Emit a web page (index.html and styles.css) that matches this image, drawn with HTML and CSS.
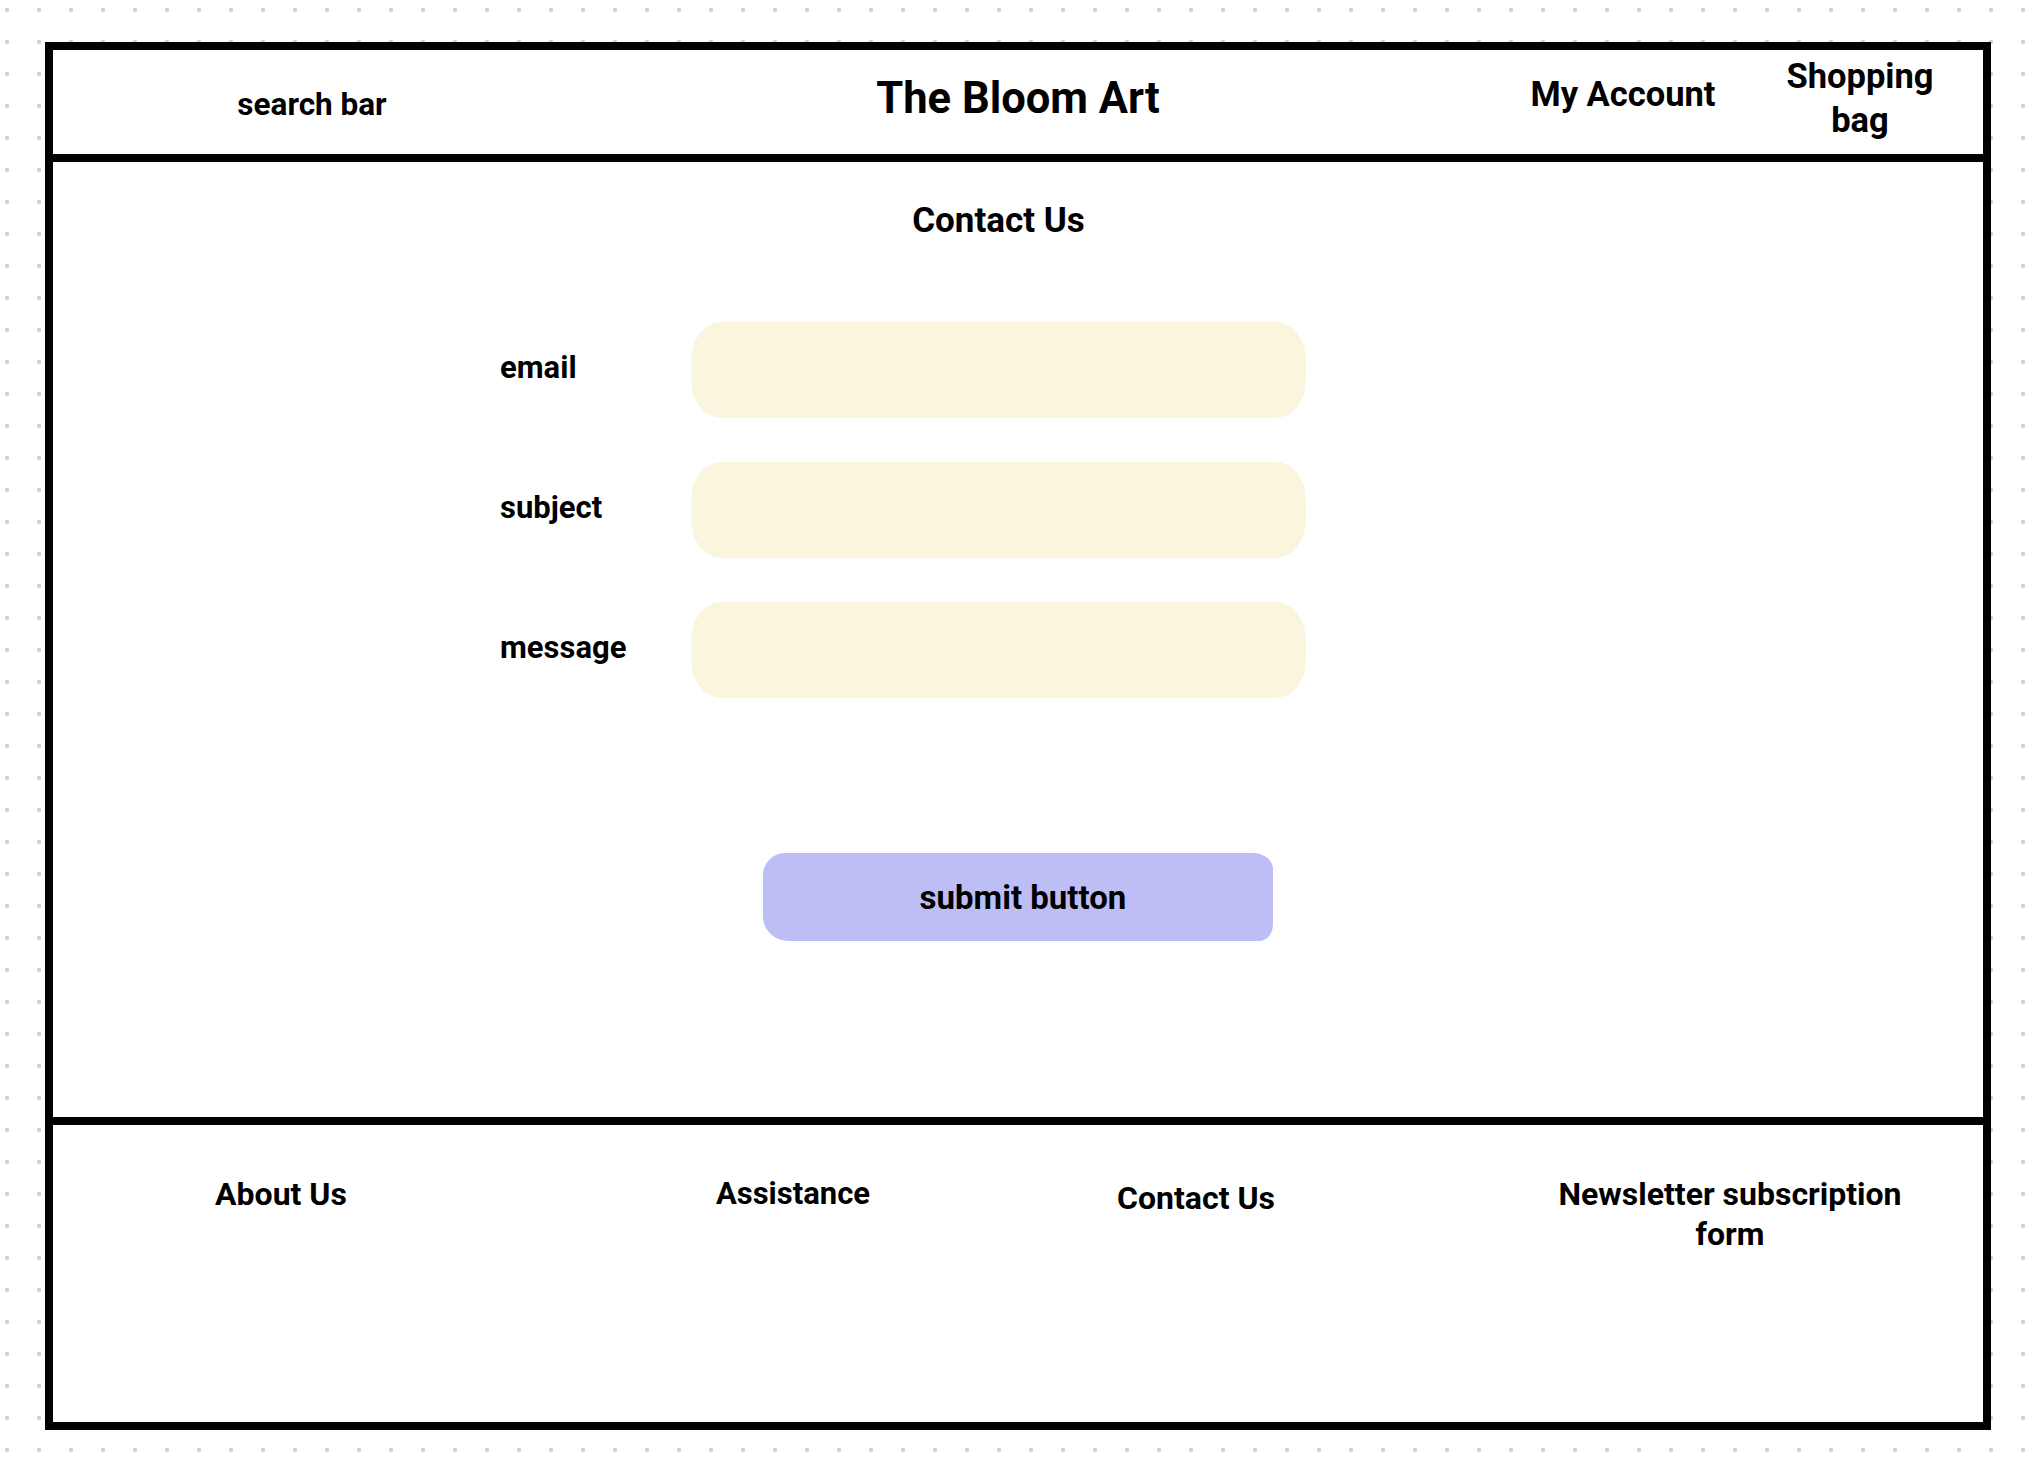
FILE: index.html
```html
<!DOCTYPE html>
<html lang="en">
<head>
<meta charset="utf-8">
<title>The Bloom Art - Contact Us</title>
<link rel="stylesheet" href="styles.css">
</head>
<body>
<div class="frame">
  <header class="site-header">
    <div class="hd-item hd-search">search bar</div>
    <div class="hd-item hd-brand">The Bloom Art</div>
    <div class="hd-item hd-account">My Account</div>
    <div class="hd-item hd-bag">Shopping bag</div>
  </header>
  <main class="content">
    <h1 class="page-title">Contact Us</h1>
    <form class="contact-form">
      <label class="field-label" for="email">email</label>
      <div class="field" id="email"></div>
      <label class="field-label" for="subject">subject</label>
      <div class="field" id="subject"></div>
      <label class="field-label" for="message">message</label>
      <div class="field" id="message"></div>
    </form>
    <div class="submit-wrap">
      <div class="submit-btn">submit button</div>
    </div>
  </main>
  <footer class="site-footer">
    <div class="ft-item ft-about">About Us</div>
    <div class="ft-item ft-assist">Assistance</div>
    <div class="ft-item ft-contact">Contact Us</div>
    <div class="ft-spacer"></div>
    <div class="ft-item ft-news">Newsletter subscription form</div>
  </footer>
</div>
</body>
</html>
```

FILE: styles.css
```css
html, body {
  margin: 0;
  padding: 0;
}

body {
  width: 2041px;
  height: 1475px;
  overflow: hidden;
  background-color: #ffffff;
  background-image: radial-gradient(circle, #cdd1db 2px, rgba(205, 209, 219, 0) 2.6px);
  background-size: 32px 32px;
  background-position: -9px -6px;
  font-family: Roboto, "Open Sans", Arial, sans-serif;
  font-weight: 700;
  color: #000;
  padding-top: 42px;
  padding-left: 45px;
  box-sizing: border-box;
}

.frame {
  width: 1946px;
  height: 1388px;
  box-sizing: border-box;
  border: 8px solid #000;
  background: #fff;
  display: flex;
  flex-direction: column;
}

/* Header */
.site-header {
  height: 104px;
  border-bottom: 8px solid #000;
  display: grid;
  grid-template-columns: 518px 894px 316px 158px 1fr;
  align-items: center;
  text-align: center;
}

.hd-search {
  font-size: 31.5px;
  padding-top: 4px;
}

.hd-brand {
  font-size: 43.5px;
  padding-bottom: 8px;
}

.hd-account {
  font-size: 34.5px;
  padding-bottom: 16px;
}

.hd-bag {
  font-size: 34.5px;
  line-height: 44px;
  padding-bottom: 8px;
}

/* Main content */
.content {
  height: 955px;
  display: flex;
  flex-direction: column;
  padding-top: 38px;
  box-sizing: border-box;
}

.page-title {
  margin: 0 0 0 638px;
  width: 615px;
  text-align: center;
  font-size: 35px;
  line-height: 42px;
  font-weight: 700;
}

.contact-form {
  margin: 80px 0 0 447px;
  display: grid;
  grid-template-columns: 191px 615px;
  row-gap: 44px;
  align-items: center;
}

.field-label {
  font-size: 31px;
  padding-bottom: 5px;
}

.field {
  height: 96px;
  background: #faf5dd;
  border-radius: 30px / 38px;
}

.submit-wrap {
  display: flex;
  justify-content: center;
  margin-top: 155px;
}

.submit-btn {
  width: 510px;
  height: 88px;
  background: #bcbef5;
  border-radius: 22px 20px 14px 26px / 22px 16px 16px 24px;
  display: flex;
  align-items: center;
  justify-content: center;
  font-size: 33px;
  padding-left: 10px;
  box-sizing: border-box;
}

/* Footer */
.site-footer {
  flex: 1;
  border-top: 8px solid #000;
  display: grid;
  grid-template-columns: 456px 568px 238px 225px 380px 1fr;
  align-items: start;
  text-align: center;
  padding-top: 49px;
}

.ft-item {
  font-size: 32px;
  line-height: 40px;
}

.ft-assist {
  font-size: 31px;
}

.ft-contact {
  padding-top: 4px;
}
```
